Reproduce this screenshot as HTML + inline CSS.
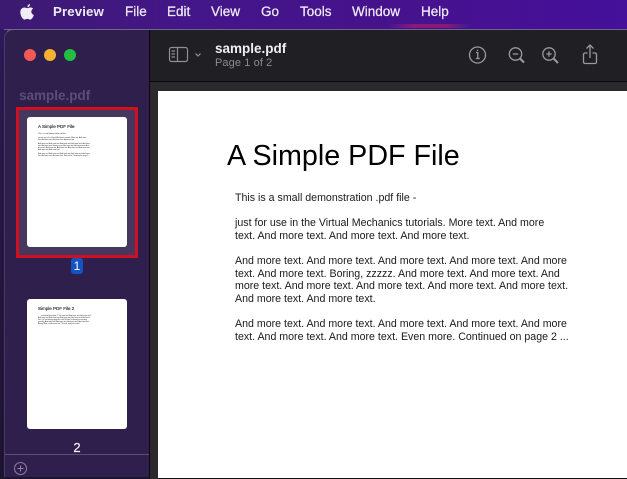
<!DOCTYPE html>
<html><head><meta charset="utf-8">
<style>
html,body{margin:0;padding:0}
body{width:627px;height:479px;overflow:hidden;position:relative;background:linear-gradient(180deg,#38186e 0,#2a1850 60px,#1d1430 100%);font-family:"Liberation Sans",sans-serif}
.a{position:absolute;white-space:nowrap}
.m{top:4px;font-size:13.5px;line-height:16px;color:#efe9f5;font-weight:400;-webkit-text-stroke:.25px #efe9f5}
.b{left:235px;font-size:10.63px;line-height:13px;color:#1a1a1a;white-space:nowrap;position:absolute}
.s{position:absolute;left:38px;font-size:1.66px;line-height:2px;color:#222;white-space:nowrap}
</style></head><body>
<div class="a" style="left:0;top:0;width:627px;height:29px;background:linear-gradient(90deg,#3c1a70 0%,#43168a 30%,#46128c 60%,#45109a 100%)"></div>
<div class="a" style="left:390px;top:24px;width:80px;height:4px;background:linear-gradient(90deg,#4a1490,#8a1a78 30%,#8a1a78 70%,#3a1a98)"></div>
<div class="a" style="left:4px;top:29px;width:623px;height:1px;background:#6f6685"></div>
<svg class="a" style="left:19px;top:3px" width="16" height="18" viewBox="0 0 16 18"><path fill="#f1edf5" d="M11 1C9.500 1.300 8.300 2.500 8.400 4.100 9.900 4.100 11.100 2.700 11 1ZM8.300 5.100C7.300 5.100 6.500 4.500 5.300 4.500 3.300 4.500 1.300 6.200 1.300 9.300 1.300 12.500 3.600 16.600 5.500 16.600 6.500 16.600 7 15.900 8.300 15.900 9.600 15.900 10 16.600 11.100 16.600 12.900 16.600 14.400 13.500 14.800 12 13 11.300 12.300 9.900 12.300 8.600 12.300 7.300 13 6.300 14.100 5.600 13.300 4.600 12 4.500 11.300 4.500 10 4.500 9.100 5.100 8.300 5.100Z"/></svg>
<div class="a m" style="left:53px;font-size:13.3px;font-weight:700;-webkit-text-stroke:0;letter-spacing:.1px">Preview</div>
<div class="a m" style="left:125px">File</div>
<div class="a m" style="left:167px">Edit</div>
<div class="a m" style="left:211px">View</div>
<div class="a m" style="left:261px">Go</div>
<div class="a m" style="left:300px">Tools</div>
<div class="a m" style="left:352px">Window</div>
<div class="a m" style="left:421px">Help</div>

<div class="a" style="left:4px;top:29px;width:146px;height:448px;background:#2f1f4c;border-radius:9px 0 0 0;border-left:1px solid #4a3d63;border-top:1px solid #6f6685;box-sizing:border-box"></div>
<div class="a" style="left:24px;top:49px;width:12px;height:12px;border-radius:50%;background:#f25a57"></div>
<div class="a" style="left:44px;top:49px;width:12px;height:12px;border-radius:50%;background:#f5b12f"></div>
<div class="a" style="left:64px;top:49px;width:12px;height:12px;border-radius:50%;background:#23c03f"></div>
<div class="a" style="left:19px;top:87px;font-size:13.5px;line-height:17px;font-weight:700;color:#5b4d75">sample.pdf</div>

<div class="a" style="left:16px;top:107px;width:122px;height:151px;box-sizing:border-box;border:3px solid #d0101e;background:#46375f"></div>
<div class="a" style="left:27px;top:117px;width:100px;height:130px;background:#fff;border-radius:3px"></div>
<div class="a" style="left:38px;top:124px;font-size:4.5px;line-height:6px;color:#111;-webkit-text-stroke:.1px #111">A Simple PDF File</div>
<div class="s" style="top:132.500px">This is a small demonstration .pdf file -</div>
<div class="s" style="top:136.500px">just for use in the Virtual Mechanics tutorials. More text. And more</div>
<div class="s" style="top:138.500px">text. And more text. And more text. And more text.</div>
<div class="s" style="top:142.500px">And more text. And more text. And more text. And more text. And more</div>
<div class="s" style="top:144.500px">text. And more text. Boring, zzzzz. And more text. And more text. And</div>
<div class="s" style="top:146.500px">more text. And more text. And more text. And more text. And more text.</div>
<div class="s" style="top:148.500px">And more text. And more text.</div>
<div class="s" style="top:152.500px">And more text. And more text. And more text. And more text. And more</div>
<div class="s" style="top:154.500px">text. And more text. And more text. Even more. Continued on page 2 ...</div>
<div class="a" style="left:71px;top:258px;width:12px;height:16px;border-radius:3px;background:#1353c4;color:#fff;font-size:12px;line-height:16px;text-align:center">1</div>

<div class="a" style="left:27px;top:299px;width:100px;height:130px;background:#fff;border-radius:3px"></div>
<div class="a" style="left:38px;top:306px;font-size:4.5px;line-height:6px;color:#111;-webkit-text-stroke:.1px #111">Simple PDF File 2</div>
<div class="s" style="top:314.500px;left:40px">...continued from page 1. Yet more text. And more text. And more text.</div>
<div class="s" style="top:316.500px">And more text. And more text. And more text. And more text. And more</div>
<div class="s" style="top:318.500px">text. Oh, how boring typing this stuff. But not as boring as watching</div>
<div class="s" style="top:320.500px">paint dry. And more text. And more text. And more text. And more text.</div>
<div class="s" style="top:322.500px">Boring. More, a little more text. The end, and just as well.</div>
<div class="a" style="left:71px;top:440px;width:12px;color:#f2f0f6;font-size:13px;line-height:16px;text-align:center;-webkit-text-stroke:.2px #f2f0f6">2</div>
<div class="a" style="left:5px;top:454px;width:144px;height:1px;background:#5c4e78"></div>
<svg class="a" style="left:13px;top:461px" width="15" height="15" viewBox="0 0 15 15" fill="none" stroke="#8d839f" stroke-width="1"><circle cx="7.500" cy="7.500" r="6"/><path d="M7.500 4.500v6M4.500 7.500h6"/></svg>

<div class="a" style="left:149px;top:30px;width:1px;height:449px;background:#0c0a10"></div>
<div class="a" style="left:150px;top:30px;width:477px;height:51px;background:#201f23"></div>
<div class="a" style="left:150px;top:81px;width:477px;height:1px;background:#08080a"></div>
<div class="a" style="left:150px;top:82px;width:477px;height:397px;background:#2a2a2c"></div>
<div class="a" style="left:158px;top:91px;width:469px;height:387px;background:#fff"></div>
<div class="a" style="left:158px;top:478px;width:469px;height:1px;background:#111"></div>

<svg class="a" style="left:168px;top:46px" width="36" height="18" viewBox="0 0 36 18" fill="none" stroke="#8f8f93" stroke-width="1.200"><rect x="1.500" y="1.500" width="18" height="14" rx="2"/><path d="M9.500 1.500v14M3.500 5h3.500M3.500 8h3.500M3.500 11h3.500"/><path d="M27.500 7.500l2.500 2.500 2.500-2.500"/></svg>
<div class="a" style="left:215px;top:40px;font-size:13.5px;line-height:17px;font-weight:700;color:#f0f0f0">sample.pdf</div>
<div class="a" style="left:215px;top:56px;font-size:11px;line-height:14px;color:#8b8b8f;letter-spacing:.1px">Page 1 of 2</div>

<svg class="a" style="left:466px;top:42px" width="140" height="26" viewBox="0 0 140 26" fill="none" stroke="#9a9a9e" stroke-width="1.300">
<circle cx="11.500" cy="13" r="8"/><path d="M10 10.500h1.800v6M9.800 16.500h4M11.500 7.800v1.200"/>
<circle cx="49.500" cy="12" r="6.200"/><path d="M46.800 12h5.400"/><path stroke-width="2" d="M54 16.500l4 4"/>
<circle cx="83" cy="12" r="6.200"/><path d="M80.300 12h5.400M83 9.300v5.400"/><path stroke-width="2" d="M87.500 16.500l4.500 4.500"/>
<path d="M121.500 11h-2.500a1.500 1.500 0 0 0-1.500 1.500v7.500a1.500 1.500 0 0 0 1.500 1.500h10a1.500 1.500 0 0 0 1.500-1.500v-7.500a1.500 1.500 0 0 0-1.500-1.500h-2.500M124 16V3.500M120.500 6.500l3.500-3.500 3.500 3.500"/>
</svg>

<div class="a" style="left:227px;top:139px;font-size:28.7px;line-height:34px;color:#000">A Simple PDF File</div>
<div class="b" style="top:192px">This is a small demonstration .pdf file -</div>
<div class="b" style="top:217px">just for use in the Virtual Mechanics tutorials. More text. And more</div>
<div class="b" style="top:230px">text. And more text. And more text. And more text.</div>
<div class="b" style="top:255px">And more text. And more text. And more text. And more text. And more</div>
<div class="b" style="top:268px">text. And more text. Boring, zzzzz. And more text. And more text. And</div>
<div class="b" style="top:280px">more text. And more text. And more text. And more text. And more text.</div>
<div class="b" style="top:293px">And more text. And more text.</div>
<div class="b" style="top:318px">And more text. And more text. And more text. And more text. And more</div>
<div class="b" style="top:331px">text. And more text. And more text. Even more. Continued on page 2 ...</div>
</body></html>
